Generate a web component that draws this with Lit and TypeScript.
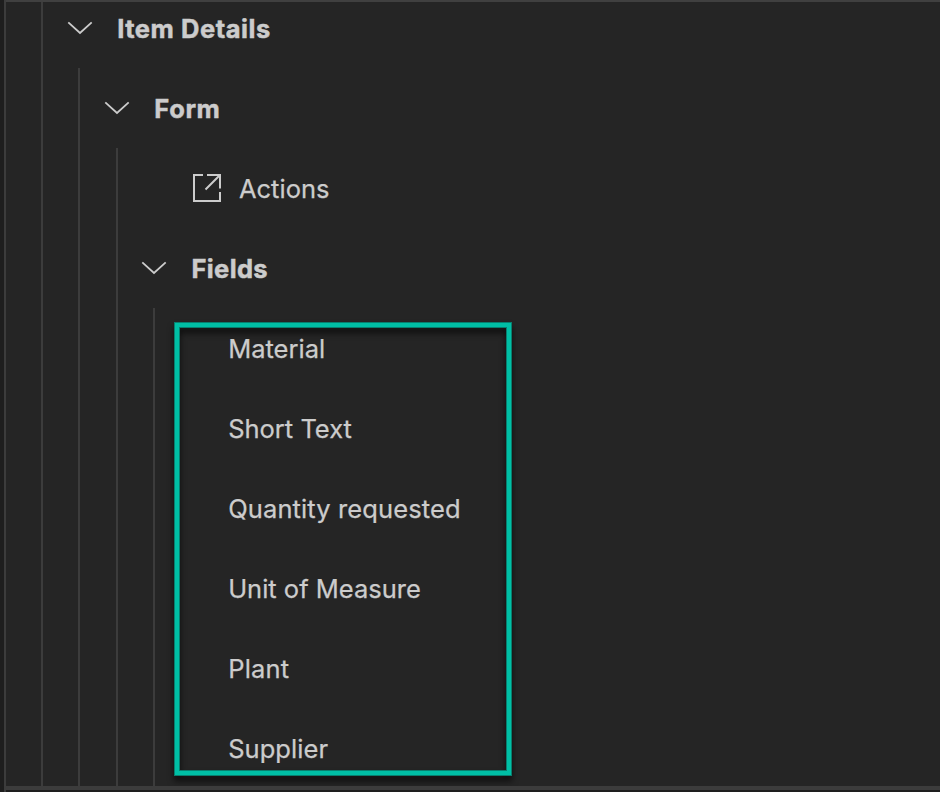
import { LitElement, html, css, svg, nothing, TemplateResult } from "lit";
import { customElement, property } from "lit/decorators.js";

interface TreeNode {
  label: string;
  spacing?: number;
  icon?: "open";
  highlight?: boolean;
  children?: TreeNode[];
}

const tree: TreeNode = {
  label: "Item Details",
  spacing: 0.54,
  children: [
    {
      label: "Form",
      spacing: 0.6,
      children: [
        { label: "Actions", icon: "open" },
        {
          label: "Fields",
          spacing: 0.35,
          highlight: true,
          children: [
            { label: "Material" },
            { label: "Short Text" },
            { label: "Quantity requested", spacing: 0.12 },
            { label: "Unit of Measure" },
            { label: "Plant", spacing: 0.2 },
            { label: "Supplier", spacing: 0.06 },
          ],
        },
      ],
    },
  ],
};

@customElement("tree-row")
export class TreeRow extends LitElement {
  @property({ attribute: false }) node!: TreeNode;

  static styles = css`
    :host { display: flex; align-items: center; height: 80px; white-space: nowrap; }
    svg { display: block; flex: none; fill: none; stroke: #cccccc; }
    .chevron { width: 26px; height: 14px; margin-left: 23.7px; stroke-width: 1.8; }
    .open { width: 28px; height: 28px; margin-left: 75.4px; stroke-width: 2; }
    .label { font-size: 25.5px; line-height: 32px; color: #cccccc; margin-left: 73.4px; padding-top: 2px; -webkit-text-stroke: 0.25px #cccccc; }
    .chevron + .label { margin-left: 24.3px; font-weight: 700; -webkit-text-stroke: 0.5px #cccccc; }
    .open + .label { margin-left: 18px; }
  `;

  render() {
    const { label, spacing, icon, children } = this.node;
    return html`${children
      ? html`<svg class="chevron" viewBox="0 0 26 14">${svg`<path d="M1.3 1.3 L13 12 L24.7 1.3" />`}</svg>`
      : icon
      ? html`<svg class="open" viewBox="0 0 28 28">
          <path d="M10 1H1V27H27V18M14 1H27V14.5M26.5 1.5L12.5 15.5" />
        </svg>`
      : nothing}<span class="label" style=${spacing ? `letter-spacing:${spacing}px` : ""}>${label}</span>`;
  }
}

@customElement("app-root")
export class AppRoot extends LitElement {
  static styles = css`
    :host {
      display: block;
      box-sizing: border-box;
      height: 792px;
      overflow: hidden;
      background: #1e1e1e;
      font-family: Inter, "Liberation Sans", sans-serif;
    }
    .panel {
      box-sizing: border-box;
      height: 792px;
      margin-left: 4px;
      border-left: 2px solid #3c3c3c;
    }
    .content {
      box-sizing: border-box;
      height: 790px;
      overflow: hidden;
      background: #252525;
      border-top: 2px solid #404040;
      border-bottom: 4px solid #3c3c3c;
    }
    .group {
      position: relative;
      margin-left: 35.2px;
      border-left: 2px solid #3c3c3c;
    }
    .content > .group { height: 784px; }
    .content > .group > tree-row { margin-top: -14px; }
    .content > .group::before { content: ""; display: table; }
    .highlight {
      position: absolute;
      box-sizing: border-box;
      left: 19.2px;
      top: 14px;
      width: 338px;
      height: 454px;
      border: 6px solid #087f6f;
      filter: drop-shadow(0 5px 3px rgba(0, 0, 0, 0.65));
    }
    .highlight::before {
      content: "";
      position: absolute;
      inset: -5px;
      border: 4px solid #00bfa5;
    }
  `;

  private branch(node: TreeNode): TemplateResult {
    return html`<tree-row .node=${node}></tree-row>${node.children
      ? html`<div class="group">
          ${node.children.map((child) => this.branch(child))}
          ${node.highlight ? html`<div class="highlight"></div>` : nothing}
        </div>`
      : nothing}`;
  }

  render() {
    return html`<div class="panel">
      <div class="content"><div class="group">${this.branch(tree)}</div></div>
    </div>`;
  }
}
